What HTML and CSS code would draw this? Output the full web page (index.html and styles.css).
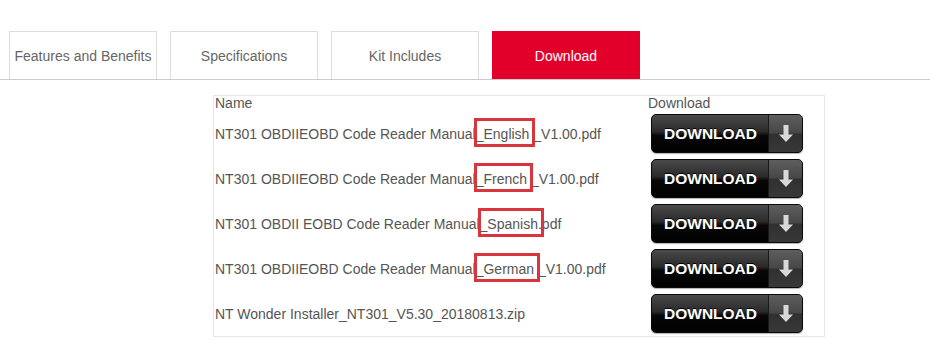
FILE: index.html
```html
<!DOCTYPE html>
<html lang="en">
<head>
  <meta charset="UTF-8">
  <meta name="viewport" content="width=device-width, initial-scale=1.0">
  <title>Download</title>
  <link rel="stylesheet" href="styles.css">
</head>
<body>
  <div class="tabs">
    <div class="tab">Features and Benefits</div>
    <div class="tab">Specifications</div>
    <div class="tab">Kit Includes</div>
    <div class="tab active">Download</div>
  </div>

  <table class="files">
    <tr class="head">
      <td class="name">Name</td>
      <td class="dl">Download</td>
    </tr>
    <tr>
      <td class="name">NT301 OBDIIEOBD Code Reader Manual<span class="mark">_English </span>_V1.00.pdf</td>
      <td class="dl"><a class="btn" href="#"><span class="btn-text">DOWNLOAD</span><span class="btn-arrow"><svg width="14" height="17" viewBox="0 0 14 17"><path d="M4.5 0h5v9.5h4.5l-7 7.5-7-7.5h4.5z" fill="#d8d8d8"/></svg></span></a></td>
    </tr>
    <tr>
      <td class="name">NT301 OBDIIEOBD Code Reader Manual<span class="mark">_French </span>_V1.00.pdf</td>
      <td class="dl"><a class="btn" href="#"><span class="btn-text">DOWNLOAD</span><span class="btn-arrow"><svg width="14" height="17" viewBox="0 0 14 17"><path d="M4.5 0h5v9.5h4.5l-7 7.5-7-7.5h4.5z" fill="#d8d8d8"/></svg></span></a></td>
    </tr>
    <tr>
      <td class="name">NT301 OBDII EOBD Code Reader Manual<span class="mark">_Spanish.</span>pdf</td>
      <td class="dl"><a class="btn" href="#"><span class="btn-text">DOWNLOAD</span><span class="btn-arrow"><svg width="14" height="17" viewBox="0 0 14 17"><path d="M4.5 0h5v9.5h4.5l-7 7.5-7-7.5h4.5z" fill="#d8d8d8"/></svg></span></a></td>
    </tr>
    <tr>
      <td class="name">NT301 OBDIIEOBD Code Reader Manual<span class="mark">_German </span>_V1.00.pdf</td>
      <td class="dl"><a class="btn" href="#"><span class="btn-text">DOWNLOAD</span><span class="btn-arrow"><svg width="14" height="17" viewBox="0 0 14 17"><path d="M4.5 0h5v9.5h4.5l-7 7.5-7-7.5h4.5z" fill="#d8d8d8"/></svg></span></a></td>
    </tr>
    <tr>
      <td class="name">NT Wonder Installer_NT301_V5.30_20180813.zip</td>
      <td class="dl"><a class="btn" href="#"><span class="btn-text">DOWNLOAD</span><span class="btn-arrow"><svg width="14" height="17" viewBox="0 0 14 17"><path d="M4.5 0h5v9.5h4.5l-7 7.5-7-7.5h4.5z" fill="#d8d8d8"/></svg></span></a></td>
    </tr>
  </table>
</body>
</html>
```

FILE: styles.css
```css
body {
  margin: 0;
  font-family: "Liberation Sans", Arial, sans-serif;
  color: #555;
  background: #fff;
}
.tabs {
  display: flex;
  gap: 13px;
  padding: 31px 0 0 9px;
  border-bottom: 1px solid #ccc;
}
.tab {
  width: 146px;
  height: 47px;
  border: 1px solid #ddd;
  border-bottom: none;
  display: flex;
  align-items: center;
  justify-content: center;
  font-size: 14px;
  color: #666;
}
.tab.active {
  background-color: #e2002b;
  border-color: #e2002b;
  color: #fff;
}
.files {
  margin: 15px 0 0 213px;
  width: 612px;
  border: 1px solid #e6e6e6;
  border-collapse: collapse;
  font-size: 14px;
}
.files td {
  padding: 0;
  height: 45px;
}
.files .head td {
  height: 15px;
  line-height: 15px;
}
.files td.name {
  padding-left: 1px;
}
.files td.dl {
  width: 176px;
}
.mark {
  position: relative;
}
.mark::after {
  content: "";
  position: absolute;
  left: -2px;
  right: -2px;
  top: -8px;
  bottom: -5px;
  border: 3px solid #d9353d;
}
.btn {
  display: flex;
  width: 152px;
  height: 39px;
  margin-left: 3px;
  box-sizing: border-box;
  border: 1px solid #0a0a0a;
  border-radius: 5px;
  overflow: hidden;
  text-decoration: none;
  background: linear-gradient(to bottom, #4a4a4a 0%, #2a2a2a 45%, #080808 55%, #000 100%);
  box-shadow: 0 1px 1px rgba(0, 0, 0, 0.3);
}
.btn-text {
  flex: 1;
  display: flex;
  align-items: center;
  justify-content: center;
  font-weight: bold;
  font-size: 15.5px;
  color: #fff;
  text-shadow: 0 -1px 0 #000;
  padding-left: 1px;
}
.btn-arrow {
  width: 33px;
  display: flex;
  align-items: center;
  justify-content: center;
  border-left: 1px solid #1a1a1a;
  background: linear-gradient(to bottom, #5e5e5e 0%, #474747 48%, #303030 52%, #383838 100%);
}
```
